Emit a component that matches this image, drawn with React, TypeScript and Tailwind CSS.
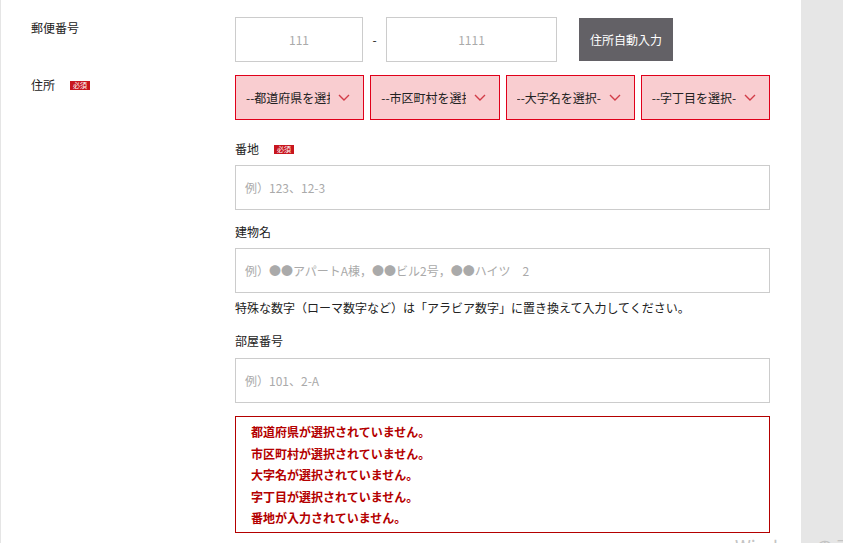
// Address form with validation errors

const font = { fontFamily: '"Noto Sans CJK JP", "Noto Sans", sans-serif' };

function Badge() {
  return (
    <span className="inline-flex h-[9px] w-[20px] items-center justify-center bg-[#c8161e] text-[7px] leading-none text-white">
      必須
    </span>
  );
}

function Chevron() {
  return (
    <svg className="h-[7px] w-[12px] shrink-0" viewBox="0 0 12 7" fill="none" stroke="#d23c48" strokeWidth={1.4}>
      <path d="M1 1l5 5 5-5" />
    </svg>
  );
}

function SelectBox({ label }: { label: string }) {
  return (
    <div className="flex h-[45px] items-center border border-[#e0001a] bg-[#f9cdd0] pl-[10px] pr-[13px]">
      <span className="flex-1 overflow-hidden whitespace-nowrap text-[12px] text-[#222]">{label}</span>
      <span className="ml-[8px]"><Chevron /></span>
    </div>
  );
}

function TextInput({ placeholder }: { placeholder: string }) {
  return (
    <div className="flex h-[45px] items-center border border-[#cccccc] bg-white pl-[9px] text-[12px] text-[#aaaaaa]">
      {placeholder}
    </div>
  );
}

export default function App() {
  const errors = [
    '都道府県が選択されていません。',
    '市区町村が選択されていません。',
    '大字名が選択されていません。',
    '字丁目が選択されていません。',
    '番地が入力されていません。',
  ];

  return (
    <div className="relative flex h-[543px] w-[843px] overflow-hidden bg-[#e6e6e6]" style={font}>
      <div className="w-[801px] border-l border-[#e5e5e5] bg-white pt-[17px] text-[12px] text-[#222]">

        {/* 郵便番号 */}
        <div className="grid grid-cols-[234px_535px]">
          <div className="pl-[30px] pt-[1px] leading-[20px]">郵便番号</div>
          <div className="flex items-center">
            <div className="flex h-[45px] w-[128px] items-center justify-center border border-[#cccccc] text-[#aaaaaa]">111</div>
            <span className="w-[23px] text-center">-</span>
            <div className="flex h-[45px] w-[171px] items-center justify-center border border-[#cccccc] text-[#aaaaaa]">1111</div>
            <button className="ml-[22px] h-[43px] w-[94px] bg-[#636166] text-[12px] text-white">住所自動入力</button>
          </div>
        </div>

        {/* 住所 */}
        <div className="mt-[13px] grid grid-cols-[234px_535px]">
          <div className="flex h-[20px] items-center gap-[15px] pl-[30px] leading-[20px]">
            <span>住所</span>
            <Badge />
          </div>
          <div className="flex flex-col">
            <div className="grid grid-cols-4 gap-[6px]">
              <SelectBox label="--都道府県を選択--" />
              <SelectBox label="--市区町村を選択--" />
              <SelectBox label="--大字名を選択-" />
              <SelectBox label="--字丁目を選択-" />
            </div>

            <div className="mt-[19px] flex h-[20px] items-center gap-[15px]">
              <span>番地</span>
              <Badge />
            </div>
            <div className="mt-[6px]"><TextInput placeholder="例）123、12-3" /></div>

            <div className="mt-[12px] h-[20px] leading-[20px]">建物名</div>
            <div className="mt-[6px]"><TextInput placeholder="例）●●アパートA棟，●●ビル2号，●●ハイツ　2" /></div>

            <p className="mt-[5px] leading-[20px]">特殊な数字（ローマ数字など）は「アラビア数字」に置き換えて入力してください。</p>

            <div className="mt-[13px] h-[20px] leading-[20px]">部屋番号</div>
            <div className="mt-[7px]"><TextInput placeholder="例）101、2-A" /></div>

            <div className="mt-[13px] border border-[#b40000] pb-[3px] pl-[15px] pt-[4px]">
              {errors.map((e) => (
                <div key={e} className="text-[12px] font-bold leading-[21.5px] text-[#b40000]">{e}</div>
              ))}
            </div>
          </div>
        </div>
      </div>

      {/* system watermark */}
      <div className="pointer-events-none absolute left-[735px] top-[533px] whitespace-nowrap text-[18px] text-[#c4c4c4]" style={{ fontFamily: '"Noto Sans CJK JP", sans-serif' }}>
        Windows のライセンス認証
      </div>
    </div>
  );
}
